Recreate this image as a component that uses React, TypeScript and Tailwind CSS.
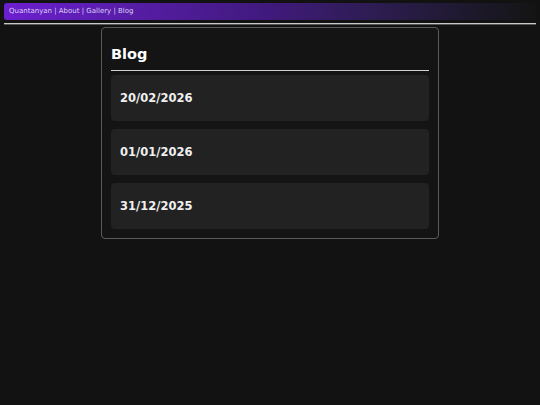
export default function App() {
  const posts = ["20/02/2026", "01/01/2026", "31/12/2025"];
  return (
    <div
      className="min-h-[405px] w-full bg-[#121212] pt-[3px]"
      style={{ fontFamily: '"DejaVu Sans", Verdana, sans-serif' }}
    >
      <nav className="mx-[4px] flex h-[17px] items-center whitespace-pre rounded-[3px] bg-gradient-to-r from-[#6c1fcf] via-[#40197c] to-[#141414] px-[5px] text-[7px] text-[#dccff5]">
        Quantanyan | About | Gallery | Blog
      </nav>
      <div className="mx-[4px] mt-[3px] h-[2px] border-t border-[#c8c8c8] border-b-[1px] border-b-[#555]" />
      <div className="mx-auto mt-[2px] w-[338px] rounded-[4px] border border-[#5a5a5a] bg-[#141414] p-[9px]">
        <div className="flex h-[34px] items-center border-b border-[#d0d0d0] pt-[3px] text-[14.5px] font-bold text-white">
          Blog
        </div>
        <div className="mt-[4px] flex flex-col gap-[8px]">
          {posts.map((p) => (
            <div
              key={p}
              className="flex h-[46px] items-center rounded-[4px] bg-[#222222] px-[9px] pt-[2px] text-[11.5px] font-bold text-[#f0f0f0]"
            >
              {p}
            </div>
          ))}
        </div>
      </div>
    </div>
  );
}
